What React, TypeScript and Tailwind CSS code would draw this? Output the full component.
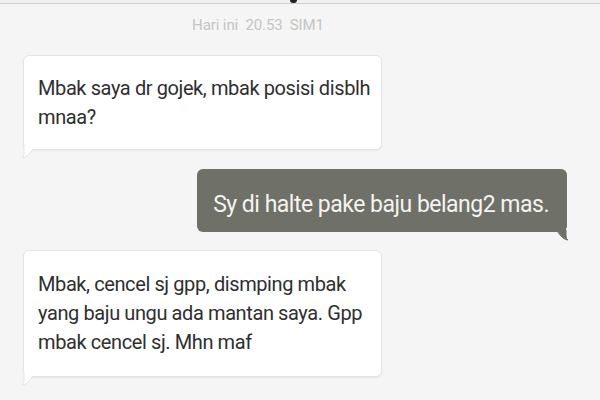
export default function App() {
  return (
    <div className="relative w-[600px] h-[400px] overflow-hidden bg-[#f5f5f5] font-['Roboto',sans-serif]">
      {/* header edge */}
      <div className="h-[3px] bg-[#f0f0f0]" />
      <div className="h-px bg-[#cfcfcf]" />
      <div className="absolute left-[290px] top-0 w-[7px] h-[3px] rounded-b-full bg-[#222]" />

      <div className="pt-[12px] text-center text-[15px] leading-[18px] text-[#c4c4c4] pr-[84px] tracking-[-0.1px]">
        Hari ini&nbsp;&nbsp;20.53&nbsp;&nbsp;SIM1
      </div>

      <div className="flex flex-col gap-[19px] pt-[21px]">
        {/* received */}
        <div className="relative ml-[23px] w-[359px]">
          <div className="rounded-[6px] bg-white border border-[#e4e4e4] shadow-[0_1px_2px_rgba(0,0,0,0.06)] pl-[14px] pt-[18px] pb-[17px] text-[20px] leading-[29px] tracking-[-0.4px] text-[#2f2f2f] whitespace-nowrap">
            Mbak saya dr gojek, mbak posisi disblh
            <br />
            mnaa?
          </div>
          <Tail side="left" color="#ffffff" border="#e4e4e4" />
        </div>

        {/* sent */}
        <div className="flex justify-end pr-[33px]">
          <div className="relative">
            <div className="rounded-[6px] bg-[#6f7067] pt-[21px] pb-[13px] pl-[16px] pr-[18px] text-[23px] leading-[29px] tracking-[-0.5px] text-[#f4f4f0] whitespace-nowrap">
              Sy di halte pake baju belang2 mas.
            </div>
            <Tail side="right" color="#6f7067" border="#6f7067" />
          </div>
        </div>

        {/* received */}
        <div className="relative ml-[23px] w-[359px] -mt-px">
          <div className="rounded-[6px] bg-white border border-[#e4e4e4] shadow-[0_1px_2px_rgba(0,0,0,0.06)] pl-[14px] pt-[19px] pb-[19px] text-[20px] leading-[29px] tracking-[-0.4px] text-[#2f2f2f] whitespace-nowrap">
            Mbak, cencel sj gpp, dismping mbak
            <br />
            yang baju ungu ada mantan saya. Gpp
            <br />
            mbak cencel sj. Mhn maf
          </div>
          <Tail side="left" color="#ffffff" border="#e4e4e4" />
        </div>
      </div>
    </div>
  );
}

function Tail({ side, color, border }: { side: "left" | "right"; color: string; border: string }) {
  if (side === "left") {
    return (
      <svg className="absolute left-[-2px] bottom-[-9px]" width="14" height="12" viewBox="0 0 14 12">
        <path d="M3 0 L3 7 Q3 10 1 11 Q6 11 12 1 L12 0 Z" fill={color} />
        <path d="M3 1 L3 7 Q3 10 1 11 Q6 11 12 2" fill="none" stroke={border} strokeWidth="1" />
      </svg>
    );
  }
  return (
    <svg className="absolute right-[-2px] bottom-[-9px]" width="14" height="12" viewBox="0 0 14 12">
      <path d="M11 0 L11 7 Q11 10 13 11 Q8 11 2 1 L2 0 Z" fill={color} />
      <path d="M11 1 L11 7 Q11 10 13 11 Q8 11 2 2" fill="none" stroke={border} strokeWidth="1" />
    </svg>
  );
}
